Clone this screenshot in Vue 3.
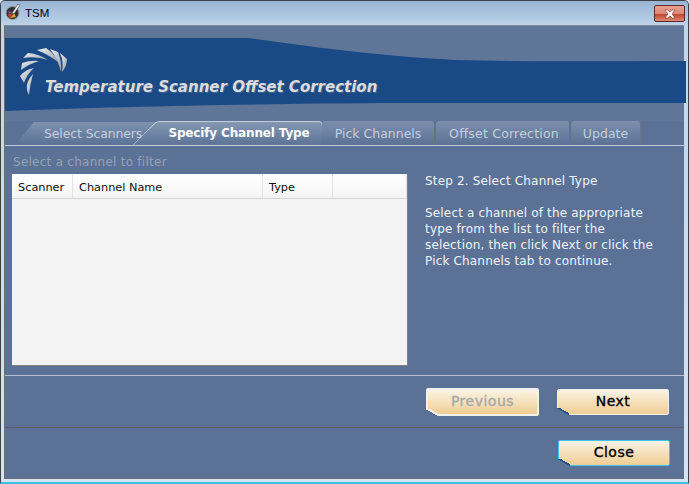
<template>
  <div class="window">
    <div class="titlebar">
      <svg class="app-icon" width="16" height="18" viewBox="0 0 16 18">
        <circle cx="7.5" cy="10" r="6.5" fill="#2f2f34" stroke="#9a9a9a" />
        <path d="M2.5 12 L8 9 L5 15 Z" fill="#c8402a" />
        <path d="M5 15 L9 10 L11 14 Z" fill="#d8a030" />
        <path d="M3 8 L7 9 L4 11 Z" fill="#7a5aa0" />
        <path d="M7 10 L13 1 L15 2 L9 11 Z" fill="#ececec" stroke="#222" stroke-width="0.5" />
      </svg>
      <span class="title-text">TSM</span>
      <div class="close-x">
        <svg width="14" height="10" viewBox="0 0 14 10">
          <path d="M2 1 H5 L7 3 L9 1 H12 L9 5 L12 9 H9 L7 7 L5 9 H2 L5 5 Z" fill="#fff" stroke="#7b3a34" stroke-width="0.6" />
        </svg>
      </div>
    </div>

    <div class="client">
      <div class="banner">
        <svg class="banner-art" width="681" height="95" viewBox="0 0 681 95">
          <path d="M0 12 L243 12 C300 20 370 30 450 34 C520 36 600 35 681 35 L681 77 L420 77 C300 77 120 80 0 85 Z" fill="#1a4a85" />
        </svg>
        <svg class="logo" width="60" height="55" viewBox="15 45 60 55">
          <defs>
            <linearGradient id="blade" x1="0" y1="0" x2="1" y2="1">
              <stop offset="0" stop-color="#f0f0f0" />
              <stop offset="1" stop-color="#929eae" />
            </linearGradient>
          </defs>
          <g fill="url(#blade)">
            <path v-for="(b, i) in blades" :key="i" :d="b" />
          </g>
        </svg>
        <div class="banner-title">Temperature Scanner Offset Correction</div>
      </div>

      <div class="tabs">
        <svg class="tab-art" width="681" height="25" viewBox="0 0 681 25">
          <defs>
            <linearGradient id="tabfill" x1="0" y1="0" x2="0" y2="1">
              <stop offset="0" stop-color="#7f93b0" />
              <stop offset="1" stop-color="#5b7296" />
            </linearGradient>
            <linearGradient id="tabactive" x1="0" y1="0" x2="0" y2="1">
              <stop offset="0" stop-color="#8598b4" />
              <stop offset="1" stop-color="#5b7296" />
            </linearGradient>
          </defs>
          <path d="M10 24 L29 1 L151 1 L128 24 Z" fill="url(#tabfill)" />
          <path d="M0 24.5 H128 L151 1" fill="none" stroke="#c2ccdb" />
          <path d="M128 25 L151 1 Q153 0.5 155 0.5 H314 Q317.5 0.5 317.5 4 V25 Z" fill="url(#tabactive)" />
          <path d="M143 9 L151 1.5 Q153 0.5 155 0.5 H314 Q317.5 0.5 317.5 4 V21 Q317.5 24.5 321 24.5 H681" fill="none" stroke="#c2ccdb" />
        </svg>
        <span class="tab first">Select Scanners</span>
        <span class="tab active">Specify Channel Type</span>
        <span class="tab pick">Pick Channels</span>
        <span class="tab offset">Offset Correction</span>
        <span class="tab update">Update</span>
      </div>

      <div class="content">
        <div class="left">
          <div class="filter-label">Select a channel to filter</div>
          <div class="table">
            <div class="thead">
              <div class="th" v-for="c in columns" :key="c.name" :style="{ width: c.width + 'px' }">{{ c.name }}</div>
            </div>
            <div class="tbody"></div>
          </div>
        </div>
        <div class="right">
          <p class="step">Step 2. Select Channel Type</p>
          <p class="help">
            Select a channel of the appropriate<br />
            type from the list to filter the<br />
            selection, then click Next or click the<br />
            Pick Channels tab to continue.
          </p>
        </div>
      </div>

      <div class="nav">
        <button class="btn disabled">Previous</button>
        <button class="btn">Next</button>
      </div>

      <div class="footer">
        <button class="btn focused">Close</button>
      </div>
    </div>
  </div>
</template>

<script setup>
const columns = [
  { name: 'Scanner', width: 61 },
  { name: 'Channel Name', width: 190 },
  { name: 'Type', width: 70 },
  { name: '', width: 74 }
]

// 标志的七片叶子
const blades = [
  'M28 95 Q22 85 32 74 Q29 85 28 95 Z',
  'M23 83 L19 76 Q25 69 33 68 Q26 74 23 83 Z',
  'M20 70 L21 63 Q30 60 38 61 Q28 64 20 70 Z',
  'M22 58 L27 53 Q38 54 47 60 Q35 56 22 58 Z',
  'M36 50 L45 48 Q53 53 57 62 Q48 55 36 50 Z',
  'M49 49 L57 52 Q61 62 60 72 Q57 59 49 49 Z',
  'M59 53 L66 59 Q66 66 61 72 Q63 62 59 53 Z'
]
</script>

<style>
html,
body {
  margin: 0;
  background: #dfe9f4;
}
</style>

<style scoped>
.window {
  width: 689px;
  height: 484px;
  box-sizing: border-box;
  display: flex;
  flex-direction: column;
  background: linear-gradient(#9db6d3, #c0d4ea 24px, #d5e3f2);
  border: 1px solid #3c4048;
  border-bottom: 2px solid #39c0e0;
  border-radius: 5px 5px 0 0;
  font-family: "DejaVu Sans", sans-serif;
  overflow: hidden;
}

.titlebar {
  height: 24px;
  flex: none;
  display: flex;
  align-items: center;
  padding: 0 3px 0 4px;
  background: linear-gradient(#9ab4d2, #bcd2e9);
}

.app-icon {
  flex: none;
  margin-top: -2px;
}

.title-text {
  margin-left: 4px;
  font: 11.5px "Liberation Sans", sans-serif;
  color: #000;
}

.close-x {
  margin-left: auto;
  width: 31px;
  height: 17px;
  margin-top: 1px;
  display: flex;
  align-items: center;
  justify-content: center;
  border: 1px solid #5d2a2a;
  border-radius: 2px;
  box-sizing: border-box;
  background: linear-gradient(#e89f90, #dc8a78 50%, #bf4630 55%, #cf6a52 80%, #d98c7c);
}

.client {
  flex: 1;
  min-height: 0;
  margin: 0 4px 3px 3px;
  display: flex;
  flex-direction: column;
  background: #5b7296;
  border-top: 1px solid #808a94;
  border-left: 1px solid #6a6f78;
  border-bottom: 1px solid #6a6f78;
}

.banner {
  height: 95px;
  flex: none;
  position: relative;
  display: flex;
  align-items: flex-start;
  background: #5f7698;
}

.banner-art {
  position: absolute;
  left: 0;
  top: 0;
}

.logo {
  position: relative;
  margin: 19px 0 0 11px;
  flex: none;
}

.banner-title {
  position: relative;
  margin: 52px 0 0 -31px;
  font: italic bold 15px "DejaVu Sans", sans-serif;
  color: #dcdcdc;
  white-space: nowrap;
  text-shadow: 1px 1px 0 #44648f;
}

.tabs {
  height: 25px;
  flex: none;
  position: relative;
  display: flex;
  align-items: center;
  font-size: 12.5px;
  color: #c4cedd;
  box-sizing: border-box;
}

.tab-art {
  position: absolute;
  left: 0;
  top: 0;
}

.tab {
  position: relative;
  height: 24px;
  margin-top: -1px;
  box-sizing: border-box;
  display: flex;
  align-items: center;
  justify-content: center;
  white-space: nowrap;
}

.tab.first {
  width: 141px;
  padding-left: 39px;
  justify-content: flex-start;
  letter-spacing: -0.13px;
}

.tab.active {
  width: 176px;
  padding-left: 10px;
  font-weight: bold;
  font-size: 12px;
  letter-spacing: -0.15px;
  color: #fff;
}

.tab.pick,
.tab.offset,
.tab.update {
  background: linear-gradient(#7c90ad, #5b7296);
  border-right: 1px solid #6a7480;
  border-radius: 3px 3px 0 0;
}

.tab.pick {
  width: 113px;
}

.tab.offset {
  width: 134px;
  margin-left: 1px;
  padding-left: 3px;
  letter-spacing: 0.2px;
}

.tab.update {
  width: 70px;
  margin-left: 1px;
}

.content {
  height: 230px;
  flex: none;
  display: flex;
  box-sizing: border-box;
  padding: 8px 0 0 7px;
  border-top: 1px solid #c2ccdb;
  margin-top: -1px;
  position: relative;
}

.left {
  width: 396px;
  flex: none;
}

.filter-label {
  font-size: 12px;
  height: 20px;
  line-height: 17px;
  padding-left: 1px;
  letter-spacing: 0.26px;
  color: #94a3b8;
}

.table {
  height: 192px;
  box-sizing: border-box;
  background: #f3f3f3;
  border-right: 1px solid #808080;
  border-bottom: 1px solid #808080;
  display: flex;
  flex-direction: column;
}

.thead {
  height: 24px;
  flex: none;
  display: flex;
  background: linear-gradient(#fff, #f4f4f4);
  border-bottom: 1px solid #d4d4d4;
}

.th {
  box-sizing: border-box;
  flex: none;
  padding: 6px 0 0 6px;
  font-size: 11.3px;
  line-height: 16px;
  color: #111;
  border-right: 1px solid #e2e2e2;
}

.right {
  flex: 1;
  padding: 0 0 0 17px;
  font-size: 12px;
  line-height: 16px;
  letter-spacing: 0.17px;
  color: #f0f3f7;
}

.step {
  margin: 19px 0 16px;
}

.help {
  margin: 0;
  white-space: nowrap;
}

.nav {
  height: 52px;
  flex: none;
  box-sizing: border-box;
  display: flex;
  justify-content: flex-end;
  align-items: center;
  gap: 18px;
  padding: 0 15px 0 0;
  border-top: 1px solid #b4c0d2;
}

.footer {
  flex: 1;
  display: flex;
  justify-content: flex-end;
  align-items: flex-start;
  padding: 12px 14px 0 0;
  border-top: 1px solid #5a6068;
}

.btn {
  position: relative;
  width: 112px;
  height: 26px;
  padding: 0 0 2px;
  box-sizing: border-box;
  font: 14px "DejaVu Sans", sans-serif;
  -webkit-text-stroke: 0.35px currentColor;
  letter-spacing: 0.5px;
  color: #000;
  background: linear-gradient(#faf3e4, #f0cd93);
  border: 1px solid #eef0f2;
  border-radius: 2px;
}

.btn::after {
  content: "";
  position: absolute;
  left: -1px;
  bottom: -1px;
  width: 12px;
  height: 7px;
  background: linear-gradient(to top right, #5b7296 48%, #1f4f8c 48%, #1f4f8c 62%, transparent 62%);
}

.btn.disabled {
  width: 113px;
  height: 28px;
  color: #a8a8a8;
  border: 2px solid #eef1f5;
}

.btn.disabled::after {
  left: -2px;
  bottom: -2px;
  background: linear-gradient(to top right, #5b7296 48%, #eef1f5 48%, #eef1f5 66%, transparent 66%);
}

.btn.focused {
  border-color: #3cc4ec;
}
</style>
